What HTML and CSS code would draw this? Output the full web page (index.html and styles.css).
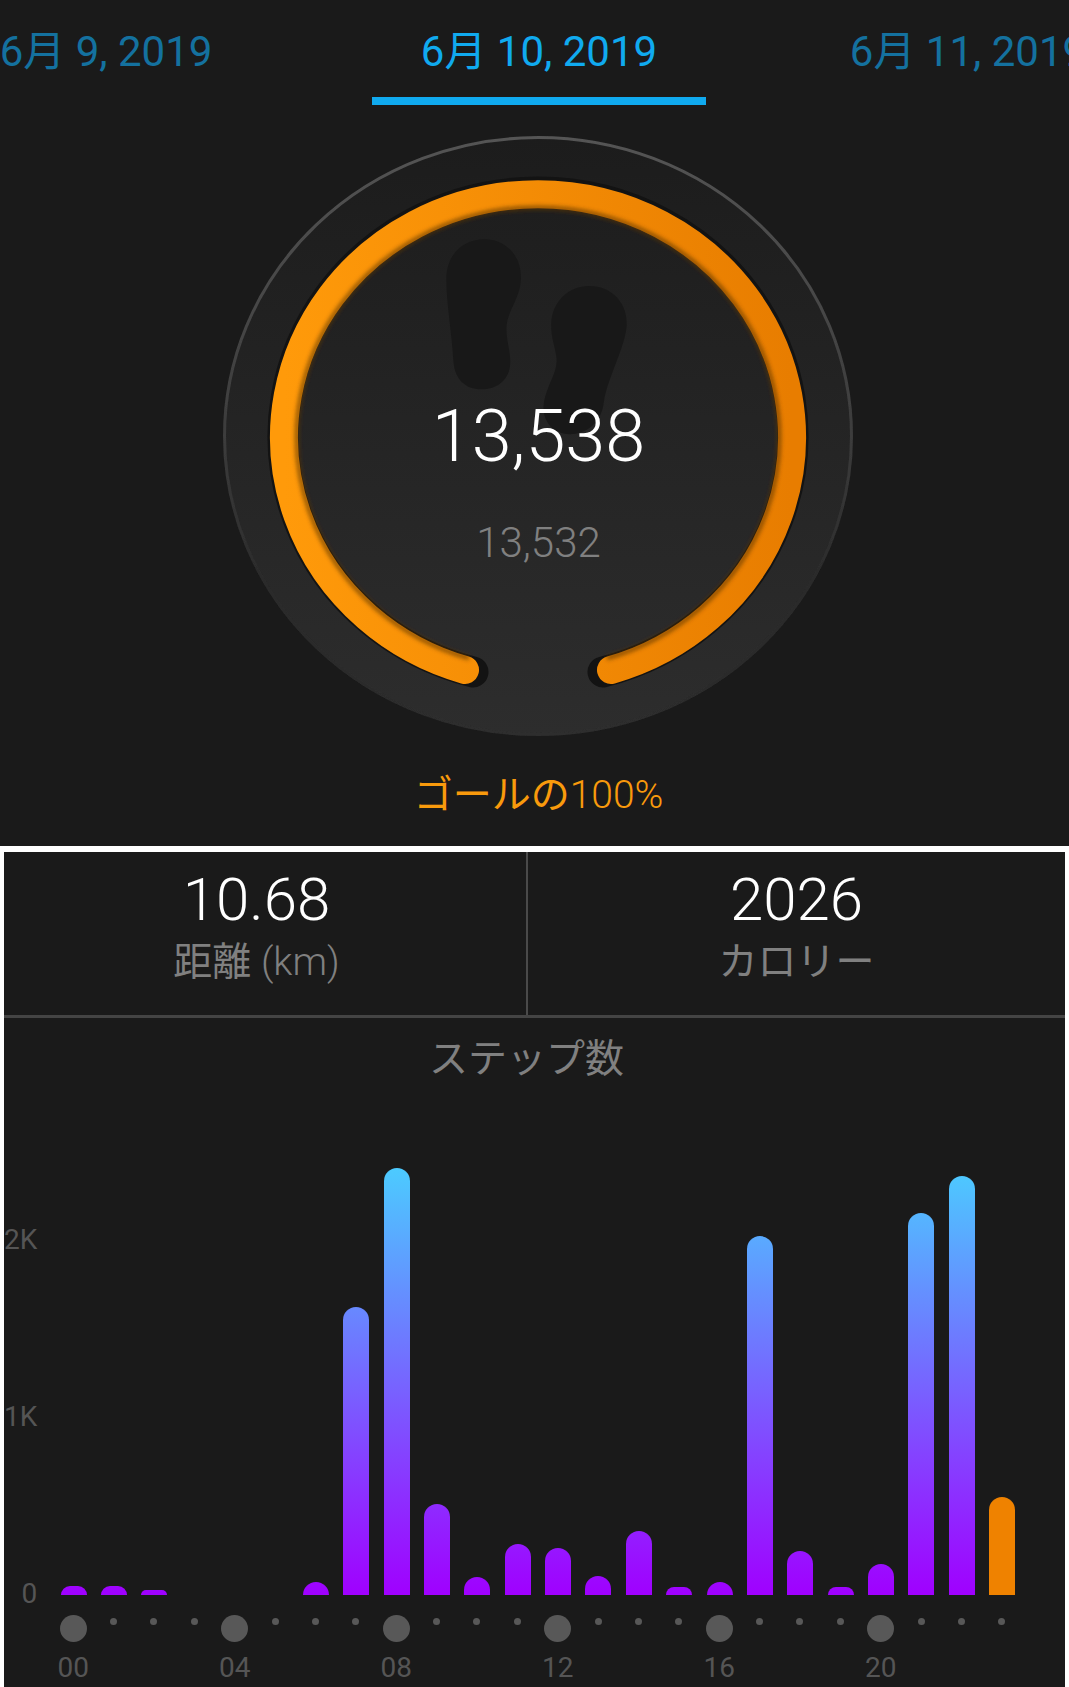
FILE: index.html
```html
<!DOCTYPE html>
<html lang="ja">
<head>
    <meta charset="UTF-8">
    <meta name="viewport" content="width=device-width, initial-scale=1.0">
    <title>ステップ数</title>
    <link rel="stylesheet" href="styles.css">
</head>
<body>
    <section class="day-panel">
        <div class="date-tabs">
            <div class="date-tab">6月 9, 2019</div>
            <div class="date-tab active">6月 10, 2019</div>
            <div class="date-tab next">6月 11, 2019</div>
        </div>
        <div class="ring">
            <svg class="ring-art" width="630" height="600" viewBox="0 0 630 600">
                <defs>
                    <linearGradient id="discFill" x1="0" y1="0" x2="0" y2="1">
                        <stop offset="0" stop-color="#1c1c1c"/>
                        <stop offset="1" stop-color="#2d2d2d"/>
                    </linearGradient>
                    <linearGradient id="discEdge" x1="0" y1="0" x2="0" y2="1">
                        <stop offset="0" stop-color="#545454"/>
                        <stop offset="0.5" stop-color="#3c3c3c"/>
                        <stop offset="0.75" stop-color="#2a2a2a"/>
                        <stop offset="1" stop-color="#2d2d2d"/>
                    </linearGradient>
                    <linearGradient id="arcFill" x1="0" y1="0" x2="1" y2="0">
                        <stop offset="0" stop-color="#ff9a0a"/>
                        <stop offset="1" stop-color="#e87d00"/>
                    </linearGradient>
                    <filter id="soft" x="-10%" y="-10%" width="120%" height="120%">
                        <feGaussianBlur stdDeviation="2"/>
                    </filter>
                    <filter id="softEdge" x="-5%" y="-5%" width="110%" height="110%">
                        <feGaussianBlur stdDeviation="0.7"/>
                    </filter>
                </defs>
                <ellipse cx="315" cy="300" rx="314" ry="299" fill="url(#discFill)"/>
                <ellipse cx="315" cy="300" rx="313.5" ry="298.5" fill="none" stroke="url(#discEdge)" stroke-width="3" filter="url(#softEdge)"/>
                <g transform="translate(-13 -16) scale(.4146 .408)" fill="#181818">
                    <path d="M570 390C570 330 610 292 662 292C715 292 752 335 750 390C748 440 715 470 715 510C715 545 726 570 724 600C720 640 690 660 655 660C615 660 590 635 587 590C583 520 570 450 570 390Z"/>
                    <path d="M823 500C825 445 865 407 915 407C970 407 1008 450 1005 505C1000 560 960 630 950 690C945 745 905 770 868 770C825 770 800 735 805 695C812 650 838 620 836 585C833 555 822 535 823 500Z"/>
                </g>
                <path d="M250 536A255 244 0 1 1 380 536" fill="none" stroke="#131313" stroke-width="31" stroke-linecap="round"/>
                <path d="M242 534A254 243 0 1 1 388 534" fill="none" stroke="url(#arcFill)" stroke-width="28" stroke-linecap="round"/>
                <path d="M246 522A241 230 0 1 1 384 522" fill="none" stroke="#5e3600" stroke-opacity="0.75" stroke-width="4" filter="url(#soft)"/>
            </svg>
            <div class="ring-steps">13,538</div>
            <div class="ring-goal">13,532</div>
        </div>
        <div class="goal-percent">ゴールの<span class="thin">100%</span></div>
    </section>

    <section class="detail-panel">
        <div class="stats">
            <div class="stat stat-distance">
                <div class="stat-value">10.68</div>
                <div class="stat-label">距離 <span class="thin">(km)</span></div>
            </div>
            <div class="stat">
                <div class="stat-value">2026</div>
                <div class="stat-label">カロリー</div>
            </div>
        </div>
        <div class="chart-title">ステップ数</div>
        <div class="plot">
            <div class="y-axis">
                <div>2K</div>
                <div>1K</div>
                <div>0</div>
            </div>
            <div class="bars">
                <div class="slot"><div class="bar" style="height:9px"></div></div>
                <div class="slot"><div class="bar" style="height:9px"></div></div>
                <div class="slot"><div class="bar" style="height:5px"></div></div>
                <div class="slot"></div>
                <div class="slot"></div>
                <div class="slot"></div>
                <div class="slot"><div class="bar" style="height:13px"></div></div>
                <div class="slot"><div class="bar" style="height:288px"></div></div>
                <div class="slot"><div class="bar" style="height:427px"></div></div>
                <div class="slot"><div class="bar" style="height:91px"></div></div>
                <div class="slot"><div class="bar" style="height:18px"></div></div>
                <div class="slot"><div class="bar" style="height:51px"></div></div>
                <div class="slot"><div class="bar" style="height:47px"></div></div>
                <div class="slot"><div class="bar" style="height:19px"></div></div>
                <div class="slot"><div class="bar" style="height:64px"></div></div>
                <div class="slot"><div class="bar" style="height:8px"></div></div>
                <div class="slot"><div class="bar" style="height:13px"></div></div>
                <div class="slot"><div class="bar" style="height:359px"></div></div>
                <div class="slot"><div class="bar" style="height:44px"></div></div>
                <div class="slot"><div class="bar" style="height:8px"></div></div>
                <div class="slot"><div class="bar" style="height:31px"></div></div>
                <div class="slot"><div class="bar" style="height:382px"></div></div>
                <div class="slot"><div class="bar" style="height:419px"></div></div>
                <div class="slot"><div class="bar current" style="height:98px"></div></div>
            </div>
        </div>
        <div class="ticks">
            <div class="tick major"><span class="dot"></span><span class="tick-label">00</span></div>
            <div class="tick"><span class="dot"></span></div>
            <div class="tick"><span class="dot"></span></div>
            <div class="tick"><span class="dot"></span></div>
            <div class="tick major"><span class="dot"></span><span class="tick-label">04</span></div>
            <div class="tick"><span class="dot"></span></div>
            <div class="tick"><span class="dot"></span></div>
            <div class="tick"><span class="dot"></span></div>
            <div class="tick major"><span class="dot"></span><span class="tick-label">08</span></div>
            <div class="tick"><span class="dot"></span></div>
            <div class="tick"><span class="dot"></span></div>
            <div class="tick"><span class="dot"></span></div>
            <div class="tick major"><span class="dot"></span><span class="tick-label">12</span></div>
            <div class="tick"><span class="dot"></span></div>
            <div class="tick"><span class="dot"></span></div>
            <div class="tick"><span class="dot"></span></div>
            <div class="tick major"><span class="dot"></span><span class="tick-label">16</span></div>
            <div class="tick"><span class="dot"></span></div>
            <div class="tick"><span class="dot"></span></div>
            <div class="tick"><span class="dot"></span></div>
            <div class="tick major"><span class="dot"></span><span class="tick-label">20</span></div>
            <div class="tick"><span class="dot"></span></div>
            <div class="tick"><span class="dot"></span></div>
            <div class="tick"><span class="dot"></span></div>
        </div>
    </section>
</body>
</html>
```

FILE: styles.css
```css
html, body {
    margin: 0;
    padding: 0;
    background: #ffffff;
}
body {
    width: 1069px;
    height: 1687px;
    overflow: hidden;
    font-family: Roboto, "Noto Sans CJK JP", sans-serif;
}
.thin {
    font-weight: 300;
}
.day-panel {
    height: 846px;
    background: #1a1a1a;
    overflow: hidden;
}
.date-tabs {
    display: flex;
    gap: 98px;
    margin-left: -61px;
    height: 105px;
}
.date-tab {
    flex: 0 0 334px;
    box-sizing: border-box;
    height: 105px;
    padding-top: 27px;
    text-align: center;
    font-size: 42px;
    line-height: 50px;
    color: #14719f;
}
.date-tab.active {
    margin-left: 1px;
    color: #10aaef;
    border-bottom: 8px solid #10aaef;
}
.date-tab.next {
    margin-left: -3px;
}
.ring {
    position: relative;
    width: 630px;
    height: 600px;
    margin: 31px 0 0 223px;
}
.ring-art {
    display: block;
}
.ring-steps {
    position: absolute;
    left: 1px;
    right: 0;
    top: 261px;
    text-align: center;
    font-size: 72px;
    font-weight: 300;
    line-height: 80px;
    color: #ffffff;
}
.ring-goal {
    position: absolute;
    left: 1px;
    right: 0;
    top: 382px;
    text-align: center;
    font-size: 42px;
    font-weight: 300;
    line-height: 50px;
    color: #808080;
}
.goal-percent {
    margin-top: 34px;
    padding-left: 8px;
    text-align: center;
    font-size: 39px;
    line-height: 50px;
    color: #f99a0c;
}
.detail-panel {
    height: 835px;
    margin: 6px 4px 0;
    background: #1a1a1a;
    overflow: hidden;
}
.stats {
    display: flex;
    height: 163px;
    border-bottom: 3px solid #444444;
}
.stat {
    flex: 1;
    text-align: center;
}
.stat-distance {
    flex: 0 0 505px;
    padding-right: 17px;
    border-right: 2px solid #4a4a4a;
}
.stat-value {
    margin-top: 18px;
    font-size: 60px;
    font-weight: 300;
    line-height: 60px;
    color: #ffffff;
}
.stat-label {
    margin-top: 4px;
    font-size: 39px;
    line-height: 56px;
    color: #808080;
}
.chart-title {
    margin-top: 16px;
    margin-bottom: -2px;
    padding-right: 16px;
    text-align: center;
    font-size: 39px;
    line-height: 50px;
    color: #808080;
}
.plot {
    display: flex;
    height: 513px;
}
.y-axis {
    flex: 0 0 49px;
    box-sizing: border-box;
    display: flex;
    flex-direction: column;
    justify-content: flex-end;
    align-items: flex-end;
    gap: 143px;
    margin-bottom: -16px;
    padding-right: 16px;
    font-size: 28px;
    line-height: 34px;
    color: #555555;
}
.bars {
    flex: 0 0 969px;
    display: flex;
    align-items: flex-end;
}
.slot {
    flex: 1;
    display: flex;
    justify-content: center;
}
.bar {
    width: 26px;
    border-radius: 13px 13px 0 0;
    background-image: linear-gradient(#4ccbff, #a000ff);
    background-size: 100% 427px;
    background-position: bottom;
    background-repeat: no-repeat;
}
.bar.current {
    background: #ef8200;
}
.ticks {
    display: flex;
    width: 969px;
    padding-left: 49px;
}
.tick {
    flex: 1;
    display: flex;
    flex-direction: column;
    align-items: center;
}
.dot {
    width: 7px;
    height: 7px;
    margin-top: 23px;
    border-radius: 50%;
    background: #585858;
}
.major .dot {
    width: 27px;
    height: 27px;
    margin-top: 20px;
}
.tick-label {
    margin-top: 9px;
    font-size: 28px;
    line-height: 34px;
    color: #555555;
}
```
